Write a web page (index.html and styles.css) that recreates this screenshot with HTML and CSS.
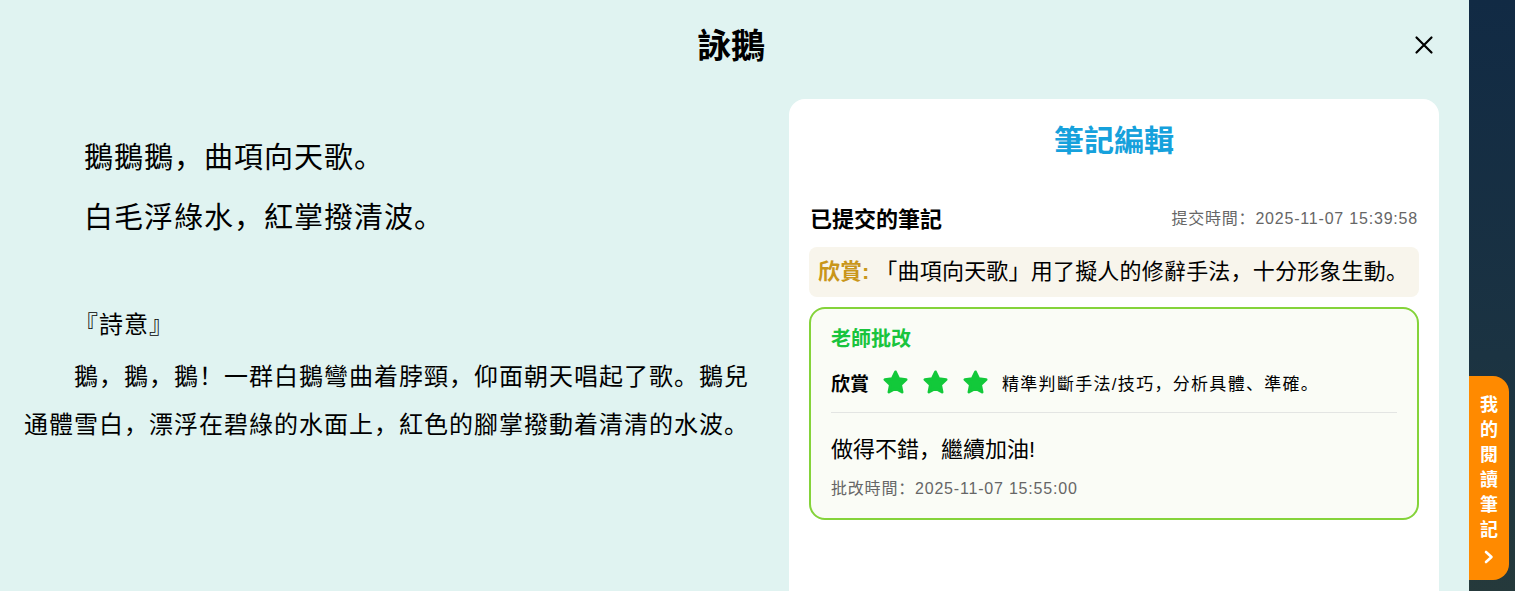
FILE: index.html
```html
<!DOCTYPE html>
<html>
<head>
<meta charset="utf-8">
<title>詠鵝</title>
<link rel="stylesheet" href="styles.css">
</head>
<body>
<div class="modal">
  <header class="modal-header">
    <div class="spacer"></div>
    <h1 class="modal-title">詠鵝</h1>
    <div class="close-wrap">
      <button class="close-btn" aria-label="關閉">
        <svg width="20" height="20" viewBox="0 0 20 20"><path d="M2.5 2.5 L17.5 17.5 M17.5 2.5 L2.5 17.5" stroke="#000" stroke-width="2.2" stroke-linecap="round" fill="none"/></svg>
      </button>
    </div>
  </header>
  <div class="modal-body">
    <section class="reading">
      <div class="poem">
        <p class="poem-line">鵝鵝鵝，曲項向天歌。</p>
        <p class="poem-line">白毛浮綠水，紅掌撥清波。</p>
      </div>
      <p class="meaning meaning-title">『詩意』</p>
      <p class="meaning">鵝，鵝，鵝！一群白鵝彎曲着脖頸，仰面朝天唱起了歌。鵝兒通體雪白，漂浮在碧綠的水面上，紅色的腳掌撥動着清清的水波。</p>
    </section>
    <aside class="note-card">
      <h2 class="card-title">筆記編輯</h2>
      <div class="submitted-head">
        <span class="submitted-label">已提交的筆記</span>
        <span class="submitted-time">提交時間：2025-11-07 15:39:58</span>
      </div>
      <div class="note-box">
        <span class="note-tag">欣賞:</span><span class="note-text">「曲項向天歌」用了擬人的修辭手法，十分形象生動。</span>
      </div>
      <div class="review-box">
        <div class="review-title">老師批改</div>
        <div class="rating-row">
          <span class="rating-label">欣賞</span>
          <span class="stars">
            <svg class="star" viewBox="0 0 24 24"><polygon points="12,2.5 14.9,8.6 21.5,9.4 16.6,14 17.9,20.6 12,17.3 6.1,20.6 7.4,14 2.5,9.4 9.1,8.6" fill="#12c93a" stroke="#12c93a" stroke-width="2.4" stroke-linejoin="round"/></svg>
            <svg class="star" viewBox="0 0 24 24"><polygon points="12,2.5 14.9,8.6 21.5,9.4 16.6,14 17.9,20.6 12,17.3 6.1,20.6 7.4,14 2.5,9.4 9.1,8.6" fill="#12c93a" stroke="#12c93a" stroke-width="2.4" stroke-linejoin="round"/></svg>
            <svg class="star" viewBox="0 0 24 24"><polygon points="12,2.5 14.9,8.6 21.5,9.4 16.6,14 17.9,20.6 12,17.3 6.1,20.6 7.4,14 2.5,9.4 9.1,8.6" fill="#12c93a" stroke="#12c93a" stroke-width="2.4" stroke-linejoin="round"/></svg>
          </span>
          <span class="rating-text">精準判斷手法/技巧，分析具體、準確。</span>
        </div>
        <div class="divider"></div>
        <div class="comment">做得不錯，繼續加油!</div>
        <div class="review-time">批改時間：2025-11-07 15:55:00</div>
      </div>
    </aside>
  </div>
</div>
<a class="notes-tab" href="#">
  <span>我</span><span>的</span><span>閱</span><span>讀</span><span>筆</span><span>記</span>
  <svg class="chev" width="12" height="14" viewBox="0 0 12 14"><path d="M3 2 L8.5 7 L3 12" stroke="#fff" stroke-width="2.6" fill="none" stroke-linecap="round" stroke-linejoin="round"/></svg>
</a>
</body>
</html>
```
FILE: styles.css
```css
* { box-sizing: border-box; }
html, body { margin: 0; padding: 0; }
body {
  width: 1515px;
  height: 591px;
  overflow: hidden;
  background: linear-gradient(180deg, #112a44 0%, #1b3342 60%, #25393b 100%);
  font-family: "Liberation Sans", "Noto Sans CJK SC", sans-serif;
  color: #000;
}
p { margin: 0; }
h1, h2 { margin: 0; }

.modal {
  width: 1469px;
  height: 591px;
  background: #e0f3f1;
  display: flex;
  flex-direction: column;
  overflow: hidden;
  position: relative;
  z-index: 2;
}
.modal-header {
  height: 88px;
  flex: none;
  display: grid;
  grid-template-columns: 1fr auto 1fr;
  align-items: center;
}
.modal-title {
  font-size: 34px;
  font-weight: 700;
  line-height: 40px;
  padding-top: 4px;
  margin-right: 7px;
}
.close-wrap {
  display: flex;
  justify-content: flex-end;
  padding-right: 35px;
  padding-top: 1px;
}
.close-btn {
  border: 0;
  background: none;
  padding: 0;
  width: 20px;
  height: 20px;
  display: flex;
  cursor: pointer;
}

.modal-body {
  flex: 1;
  display: flex;
  gap: 24px;
  padding: 11px 30px 0 24px;
  min-height: 0;
}
.reading {
  flex: 1;
  min-width: 0;
}
.poem {
  margin-top: 29px;
  padding-left: 60px;
}
.poem-line {
  font-size: 29px;
  letter-spacing: 1px;
  line-height: 60px;
}
.meaning {
  font-size: 24px;
  line-height: 48px;
  text-indent: 50px;
  width: 730px;
  letter-spacing: 1px;
}
.meaning-title {
  margin-top: 53px;
  margin-bottom: 4px;
}

.note-card {
  width: 650px;
  flex: none;
  background: #fff;
  border-radius: 16px 16px 0 0;
  padding: 22px 20px 0 20px;
}
.card-title {
  text-align: center;
  font-size: 30px;
  line-height: 40px;
  font-weight: 700;
  color: #16a1dc;
}
.submitted-head {
  margin-top: 42px;
  display: flex;
  justify-content: space-between;
  align-items: center;
  height: 28px;
  padding: 0 1px;
}
.submitted-label {
  font-size: 22px;
  font-weight: 700;
}
.submitted-time {
  font-size: 16px;
  color: #666;
  letter-spacing: 0.8px;
}
.note-box {
  margin-top: 16px;
  background: #f8f5ec;
  border-radius: 8px;
  padding: 10px 9px;
  line-height: 30px;
  font-size: 22px;
}
.note-tag {
  color: #c9961a;
  font-weight: 700;
  font-size: 22px;
  margin-right: 6px;
}
.note-text {
  letter-spacing: 0.2px;
}
.review-box {
  margin-top: 10px;
  border: 2px solid #84d33a;
  border-radius: 16px;
  background: #fafcf6;
  padding: 16px 20px 17px 20px;
}
.review-title {
  color: #19c43d;
  font-size: 20px;
  font-weight: 700;
  line-height: 28px;
}
.rating-row {
  margin-top: 14px;
  display: flex;
  align-items: center;
  gap: 13px;
  height: 30px;
}
.rating-label {
  font-size: 19px;
  font-weight: 700;
}
.stars {
  display: flex;
  gap: 13px;
}
.star {
  width: 27px;
  height: 27px;
  display: block;
}
.rating-text {
  font-size: 17px;
  letter-spacing: 1.3px;
}
.divider {
  margin-top: 15px;
  height: 1px;
  background: #e3e5e3;
}
.comment {
  margin-top: 22px;
  font-size: 22px;
  line-height: 30px;
}
.review-time {
  margin-top: 12px;
  font-size: 16px;
  line-height: 24px;
  color: #666;
  letter-spacing: 0.8px;
}

.notes-tab {
  position: fixed;
  left: 1469px;
  top: 376px;
  width: 40px;
  height: 204px;
  background: #ff8a00;
  border-radius: 0 16px 16px 0;
  z-index: 1;
  display: flex;
  flex-direction: column;
  align-items: center;
  padding-top: 17px;
  text-decoration: none;
  color: #fff;
  font-size: 18px;
  font-weight: 700;
  line-height: 25px;
}
.notes-tab .chev {
  margin-top: 7px;
}
```
